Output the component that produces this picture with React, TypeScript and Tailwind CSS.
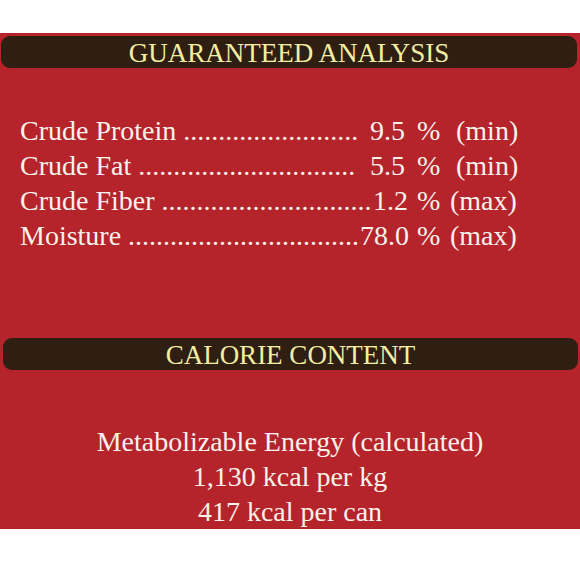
import React from "react";

interface Row {
  label: string;
  count: number;
  lead: string;
  box: string;
  value: string;
  unit: string;
  unitPad: string;
}

const rows: Row[] = [
  { label: "Crude Protein", count: 25, lead: "w-[337px]", box: "w-[48px]", value: "9.5", unit: "(min)", unitPad: "pl-[6px]" },
  { label: "Crude Fat", count: 31, lead: "w-[337px]", box: "w-[48px]", value: "5.5", unit: "(min)", unitPad: "pl-[6px]" },
  { label: "Crude Fiber", count: 30, lead: "w-[353px]", box: "w-[32px]", value: "1.2", unit: "(max)", unitPad: "pl-0" },
  { label: "Moisture", count: 33, lead: "w-[340px]", box: "w-[45px]", value: "78.0", unit: "(max)", unitPad: "pl-0" },
];

const Banner = ({ title, className }: { title: string; className: string }) => (
  <div
    className={`h-[32px] rounded-[9px] bg-[#2e1f12] flex items-center justify-center text-[27px] leading-none text-[#f4eea2] ${className}`}
  >
    <span className="pt-[2px]">{title}</span>
  </div>
);

const App = () => {
  return (
    <div className="w-[580px] h-[580px] bg-white font-['Liberation_Serif',serif]">
      <div className="h-[33px]" />
      <div className="h-[496px] bg-[#b5232b] pt-[3px] flex flex-col text-[#f8f2ec]">
        <Banner title="GUARANTEED ANALYSIS" className="ml-[1px] mr-[3px]" />

        <div className="mt-[45px] pl-[20px] flex flex-col text-[28px] leading-[35px]">
          {rows.map((row) => (
            <div key={row.label} className="flex items-baseline whitespace-nowrap">
              <span className={row.lead}>
                {row.label} {".".repeat(row.count)}
              </span>
              <span className={`${row.box} text-right`}>{row.value}</span>
              <span className="ml-[12px] w-[33px]">%</span>
              <span className={row.unitPad}>{row.unit}</span>
            </div>
          ))}
        </div>

        <Banner title="CALORIE CONTENT" className="mt-[85px] ml-[3px] mr-[2px]" />

        <div className="mt-[54px] flex flex-col items-center text-[28px] leading-[35px]">
          <span>Metabolizable Energy (calculated)</span>
          <span>1,130 kcal per kg</span>
          <span>417 kcal per can</span>
        </div>
      </div>
    </div>
  );
};

export default App;
